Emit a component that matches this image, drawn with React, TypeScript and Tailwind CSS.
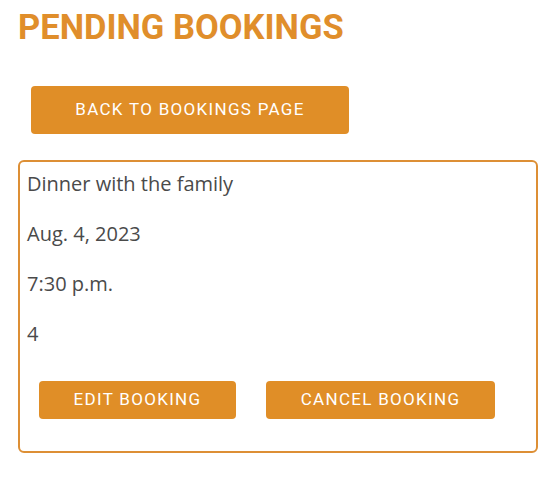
export default function App() {
  const details = ["Dinner with the family", "Aug. 4, 2023", "7:30 p.m.", "4"];

  return (
    <div className="min-h-[485px] bg-white px-[18px] pt-[6px]">
      <h1 className="font-['Roboto',sans-serif] text-[34.5px] font-bold uppercase leading-[42px] text-[#e08e2b]">
        Pending Bookings
      </h1>

      <button
        type="button"
        className="ml-[13px] mt-[38px] h-[48px] w-[318px] rounded-[4px] bg-[#e08e27] font-['Roboto',sans-serif] text-[17px] font-normal uppercase tracking-[1.3px] text-white"
      >
        Back to bookings page
      </button>

      <div className="mt-[26px] w-[520px] rounded-[6px] border-2 border-[#dd8f35] pb-[32px] pl-[7px] pt-[7px]">
        {details.map((d) => (
          <p key={d} className="mb-[20px] font-['Open_Sans',sans-serif] text-[20px] leading-[30px] text-[#4a4a4a]">
            {d}
          </p>
        ))}
        <div className="ml-[12px] mt-[32px] flex gap-[30px]">
          <button
            type="button"
            className="h-[38px] w-[197px] rounded-[4px] bg-[#e08e27] font-['Roboto',sans-serif] text-[17px] font-normal uppercase tracking-[1.3px] text-white"
          >
            Edit booking
          </button>
          <button
            type="button"
            className="h-[38px] w-[229px] rounded-[4px] bg-[#e08e27] font-['Roboto',sans-serif] text-[17px] font-normal uppercase tracking-[1.3px] text-white"
          >
            Cancel booking
          </button>
        </div>
      </div>
    </div>
  );
}
